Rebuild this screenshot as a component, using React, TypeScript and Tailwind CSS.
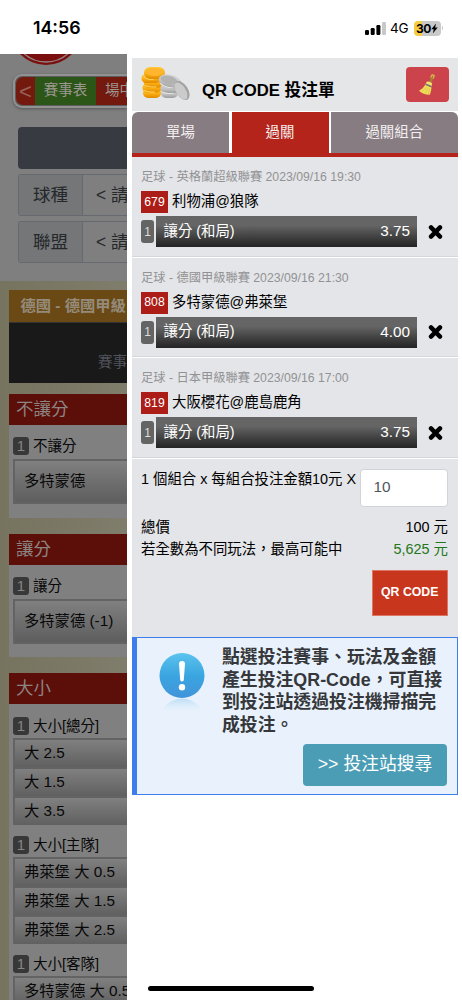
import type { ReactNode } from "react";
import clsx from "clsx";

const bets = [
  { league: "足球 - 英格蘭超級聯賽 2023/09/16 19:30", no: "679", match: "利物浦@狼隊", odds: "3.75" },
  { league: "足球 - 德國甲級聯賽 2023/09/16 21:30", no: "808", match: "多特蒙德@弗萊堡", odds: "4.00" },
  { league: "足球 - 日本甲級聯賽 2023/09/16 17:00", no: "819", match: "大阪櫻花@鹿島鹿角", odds: "3.75" },
];

const totals = [
  { title: "大小[總分]", rows: ["大 2.5", "大 1.5", "大 3.5"] },
  { title: "大小[主隊]", rows: ["弗萊堡 大 0.5", "弗萊堡 大 1.5", "弗萊堡 大 2.5"] },
  { title: "大小[客隊]", rows: ["多特蒙德 大 0.5"] },
];

const alertLines = ["點選投注賽事、玩法及金額", "產生投注QR-Code，可直接", "到投注站透過投注機掃描完", "成投注。"];

function StatusBar() {
  return (
    <div className="flex h-[54px] items-start justify-between pt-[18px] pr-[19px] pl-[33px]">
      <span className="font-['Inter'] text-[17.8px] leading-5 font-semibold">14:56</span>
      <div className="flex h-5 items-center">
        <svg width="21" height="14" viewBox="0 0 21 14">
          <rect x="0" y="9" width="4" height="5" rx="1.2" />
          <rect x="5.7" y="7" width="4" height="7" rx="1.2" />
          <rect x="11.4" y="4" width="4" height="10" rx="1.2" />
          <rect x="17" y="1" width="4" height="13" rx="1.2" fill="#c8c8c8" />
        </svg>
        <span className="ml-1 font-['Inter'] text-[13.5px] tracking-[-0.2px]">4G</span>
        <div className="ml-[5px] flex h-[15px] w-[27px] items-center justify-center rounded-[4px] bg-linear-to-r from-[#f7cc45] from-30% to-[#c9c9c9] to-30%">
          <span className="font-['Inter'] text-[12px] leading-[15px] font-bold tracking-[-0.3px]">30</span>
          <svg width="7" height="11" viewBox="0 0 7 11">
            <path d="M5 0.5 0.3 6.2h2.5L1.8 10.5 6.7 4.6H4.1Z" />
          </svg>
        </div>
        <span className="ml-px h-1 w-[1.5px] rounded-r bg-[#c9c9c9]" />
      </div>
    </div>
  );
}

function Badge() {
  return (
    <span className="flex h-[18px] w-4 shrink-0 items-center justify-center rounded-[3px] bg-[#383838] text-[15px] text-[#858585]">
      1
    </span>
  );
}

function SectionTitle({ children }: { children: ReactNode }) {
  return (
    <h2 className="flex h-[31px] items-center bg-[#5c0e09] pl-[7px] text-[17.5px] text-[#8b8581]">{children}</h2>
  );
}

function Filter({ label }: { label: string }) {
  return (
    <div className="mb-[5px] ml-[18px] flex h-[42px] items-stretch rounded-l-[3px] border border-r-0 border-[#666a70] bg-[#7f7f7f] text-[17.5px] text-[#25282b]">
      <div className="flex w-16 shrink-0 items-center justify-center border-r border-[#666a70] bg-[#747678]">{label}</div>
      <div className="flex items-center pl-[13px]">&lt; 請</div>
    </div>
  );
}

function Market({ title, pick }: { title: string; pick: string }) {
  return (
    <section className="mb-4 ml-[9px]">
      <SectionTitle>{title}</SectionTitle>
      <div className="h-[92.5px] bg-[#808080] pt-[12px] pl-1">
        <div className="flex items-center gap-1 text-[14.5px] leading-[18px]">
          <Badge />
          {title}
        </div>
        <div className="mt-1 flex h-[45px] items-center border-2 border-r-0 border-[#636363] bg-linear-to-b from-[#808080] to-[#5e5e5e] pl-[9px] text-[15.3px]">
          {pick}
        </div>
      </div>
    </section>
  );
}

function Background() {
  return (
    <div className="h-full w-[127px] shrink-0 overflow-hidden bg-[#7f7f7f] whitespace-nowrap text-[#080808]">
      <svg width="127" height="20" viewBox="0 0 127 20" className="block">
        <circle cx="46" cy="-25" r="36" fill="#79100f" />
        <circle cx="46" cy="-25" r="33" fill="none" stroke="#938686" strokeWidth="1.3" />
      </svg>
      <div className="ml-[13px] flex h-[34px] rounded-l-[9px] border-2 border-r-0 border-[#929292] bg-[#5d5d5d] py-px pl-px text-[14.5px] text-[#9c9691] shadow-[0_1px_3px_#555]">
        <div className="flex w-[19px] shrink-0 items-center justify-center rounded-l-[7px] bg-[#74190e] text-[22px] text-[#9a6159]">&lt;</div>
        <div className="flex w-[61px] shrink-0 items-center justify-center bg-[#2c5617]">賽事表</div>
        <div className="flex flex-1 items-center overflow-hidden bg-[#74190e] pl-[9px]">場中</div>
      </div>
      <div className="mt-[19px] mb-[5px] ml-[18px] h-[42px] rounded-l-[4px] bg-[#373a40]" />
      <Filter label="球種" />
      <Filter label="聯盟" />
      <div className="mt-[18px] bg-linear-to-r from-[#76745f] to-[#7f7d6b] pt-[9px] pb-6">
        <div className="ml-[9px] flex h-8 items-center bg-[#6b4914] pl-[11.5px] text-[15.3px] font-bold text-[#948b7a]">
          德國 - 德國甲級
        </div>
        <div className="mb-[11px] ml-[9px] flex h-[61px] items-end border-t border-[#333] bg-[#191919] pb-[9px] pl-[89px] text-[14.5px] text-[#50525b]">
          賽事
        </div>
        <Market title="不讓分" pick="多特蒙德" />
        <Market title="讓分" pick="多特蒙德 (-1)" />
        <section className="ml-[9px]">
          <SectionTitle>大小</SectionTitle>
          <div className="bg-[#808080] pt-[13px] pl-1">
            {totals.map((group) => (
              <div key={group.title} className="mb-[11px]">
                <div className="mb-[3px] flex items-center gap-1 text-[14.5px] leading-[18px]">
                  <Badge />
                  {group.title}
                </div>
                <div className="border-l-2 border-[#636363]">
                  {group.rows.map((row) => (
                    <div
                      key={row}
                      className="flex h-[29px] items-center border-t-2 border-[#636363] bg-linear-to-b from-[#808080] to-[#606060] pl-[9px] text-[15.3px]"
                    >
                      {row}
                    </div>
                  ))}
                </div>
              </div>
            ))}
          </div>
        </section>
      </div>
    </div>
  );
}

function Coins() {
  return (
    <svg width="52" height="38" viewBox="0 0 52 38">
      <defs>
        <linearGradient id="gold" x1="0" x2="0" y1="0" y2="1">
          <stop offset="0" stopColor="#ffc93c" />
          <stop offset="0.55" stopColor="#fcae14" />
          <stop offset="1" stopColor="#e08a00" />
        </linearGradient>
        <linearGradient id="silver" x1="0" x2="0" y1="0" y2="1">
          <stop offset="0" stopColor="#d4d4d4" />
          <stop offset="0.6" stopColor="#c3c3c3" />
          <stop offset="1" stopColor="#9c9c9c" />
        </linearGradient>
      </defs>
      <g fill="url(#gold)">
        <rect x="3" y="23" width="18" height="10" rx="5" />
        <rect x="2.5" y="18" width="19" height="9.5" rx="4.7" />
        <rect x="4" y="13.5" width="19" height="9" rx="4.5" />
        <rect x="1.5" y="9" width="19" height="9" rx="4.5" />
        <rect x="4" y="2" width="21" height="12" rx="6" />
      </g>
      <ellipse cx="14.5" cy="7" rx="8.5" ry="4" fill="#ffb52e" />
      <path d="M4 11.5q3 3.5 9 3M5 20.5q4 2 11 1.2M4.5 25.5q4 2 10 1.5" fill="none" stroke="#ffd45c" strokeWidth="1.1" strokeLinecap="round" />
      <g fill="url(#silver)">
        <rect x="21" y="23" width="17" height="10" rx="5" />
        <rect x="20.5" y="18" width="19" height="10" rx="5" />
        <ellipse cx="30" cy="16.5" rx="11.5" ry="6.8" transform="rotate(14 30 16.5)" />
      </g>
      <ellipse cx="29" cy="15" rx="8.5" ry="4" fill="#b2b2b2" transform="rotate(14 29 15)" />
      <path d="M20.5 18.5q5 4.5 13 4.5M22 27q5 2.2 11 1.2" fill="none" stroke="#e2e2e2" strokeWidth="1.1" strokeLinecap="round" />
      <ellipse cx="42" cy="25.5" rx="6" ry="10.5" fill="#a2a2a2" transform="rotate(-32 42 25.5)" />
      <ellipse cx="41" cy="26" rx="4.8" ry="9.6" fill="#cbcbcb" transform="rotate(-32 41 26)" />
    </svg>
  );
}

function Broom() {
  return (
    <svg width="18" height="23" viewBox="0 0 18 23">
      <path d="m12 10 3-7" stroke="#a97c32" strokeWidth="2.8" strokeLinecap="round" />
      <path d="m12.6 4.5 1.5-2.7 2 .7-.7 3" fill="none" stroke="#e1b654" strokeWidth="1.2" />
      <path d="M8.5 9c.7-1.4 5.6.2 5.6 2l-.8 3.2-5.8-2.4Z" fill="#f5e272" />
      <path d="M7.4 11.3C5.7 14.8 3.8 16.3 1 17.7c2.8 2.8 6.7 4.2 10.7 4.1 1.1-2.5 1.8-4.8 1.7-8.1Z" fill="#efdc59" />
      <path d="m7.6 11.2 6.1 2.5" stroke="#81706b" strokeWidth="1.6" />
      <path d="M4.1 18.6 8 14.5M7.3 20.3l2.5-5.2M10.4 21l1.3-5.3" stroke="#cdb645" strokeWidth="0.6" />
    </svg>
  );
}

function Tab({ children, className }: { children: ReactNode; className: string }) {
  return <div className={clsx("flex items-center justify-center", className)}>{children}</div>;
}

function Bet({ bet }: { bet: (typeof bets)[number] }) {
  return (
    <div className="h-[100.5px] border-b border-white bg-[#e4e5e8] pt-[11px] pl-[9px] shadow-[inset_0_-1px_0_#d5d6d9]">
      <p className="text-[12.25px] leading-[18px] text-[#929294]">{bet.league}</p>
      <div className="mt-[5px] flex h-[22px] items-center gap-1">
        <span className="flex h-[22px] w-[27px] items-center justify-center bg-[#ab1d16] text-[12.2px] text-white">{bet.no}</span>
        <span className="text-[14.4px]">{bet.match}</span>
      </div>
      <div className="mt-[3px] flex h-[31px] items-center">
        <span className="flex h-[23px] w-[13px] items-center justify-center rounded-[3px] bg-[#646464] text-[12px] text-[#ddd]">1</span>
        <div className="ml-[2px] flex h-full w-[261px] items-center justify-between bg-linear-to-b from-[#656565] from-30% to-[#242424] pr-[7px] pl-[7.5px] text-white">
          <span className="text-[14.4px]">讓分 (和局)</span>
          <span className="text-[15.3px]">{bet.odds}</span>
        </div>
        <svg width="15" height="14" viewBox="0 0 15 14" className="ml-[10.5px]">
          <path d="m3 2.4 9 9.2m0-9.2-9 9.2" stroke="#000" strokeWidth="4.4" strokeLinecap="round" />
        </svg>
      </div>
    </div>
  );
}

function AlertIcon() {
  return (
    <svg width="46" height="64" viewBox="0 0 46 64">
      <defs>
        <linearGradient id="ball" x1="0" x2="0" y1="0" y2="1">
          <stop offset="0" stopColor="#5cc3ee" />
          <stop offset="0.5" stopColor="#3aa5e0" />
          <stop offset="1" stopColor="#4294da" />
        </linearGradient>
        <linearGradient id="mirror" x1="0" x2="0" y1="0" y2="1">
          <stop offset="0" stopColor="#a9d5f2" stopOpacity="0.7" />
          <stop offset="0.35" stopColor="#e9f2fc" stopOpacity="0" />
        </linearGradient>
      </defs>
      <circle cx="23" cy="69" r="22.5" fill="url(#mirror)" />
      <circle cx="23" cy="23.5" r="22.5" fill="url(#ball)" />
      <path d="M20 12a3 3 0 0 1 6 0l-1.2 15.8a1.8 1.8 0 0 1-3.6 0Z" fill="#fff" />
      <circle cx="23" cy="35.3" r="3.2" fill="#fff" />
    </svg>
  );
}

function BetSlip() {
  return (
    <div className="mt-1 ml-[5px] w-[325.5px] shrink-0 whitespace-nowrap">
      <header className="flex h-[53px] items-start justify-between bg-[#e4e6e8] pt-[7px] pr-[9px] pl-[8px]">
        <div className="flex items-start">
          <Coins />
          <h1 className="ml-[10px] pt-[14px] text-[16.7px] leading-6 font-bold">QR CODE 投注單</h1>
        </div>
        <button className="mt-[2px] flex h-[35px] w-[43px] items-center justify-center rounded-[4px] bg-[#cc434b]">
          <Broom />
        </button>
      </header>
      <nav className="mt-px flex h-[45px] gap-[2.5px] border-b-4 border-[#b5241a] text-[14.4px] text-[#f3eff0]">
        <Tab className="w-[97px] rounded-tl-[6px] bg-[#877c82]">單場</Tab>
        <Tab className="w-[97px] bg-[#b5241a]">過關</Tab>
        <Tab className="flex-1 rounded-tr-[6px] bg-[#877c82]">過關組合</Tab>
      </nav>
      {bets.map((bet) => (
        <Bet key={bet.no} bet={bet} />
      ))}
      <div className="h-[178.5px] bg-[#e4e5e8] pt-[10px] pr-[9.5px] pl-[9px] text-[14.4px]">
        <div className="flex items-start justify-between">
          <span className="leading-5">1 個組合 x 每組合投注金額10元 X</span>
          <div className="flex h-[38px] w-[88.5px] items-center rounded-[4px] border border-[#d0d4d9] bg-white pl-[13px] text-[15.3px] text-[#50565c]">10</div>
        </div>
        <div className="mt-[9px] flex justify-between leading-[22.5px]">
          <span>總價</span>
          <span>100 元</span>
        </div>
        <div className="flex justify-between leading-[22.5px]">
          <span>若全數為不同玩法，最高可能中</span>
          <span className="text-[#23761a]">5,625 元</span>
        </div>
        <button className="mt-[9px] ml-auto flex h-[46px] w-[76.5px] items-center justify-center border border-[#dd7565] bg-[#c8361d] text-[12.3px] font-bold text-white">
          QR CODE
        </button>
      </div>
      <div className="flex h-[158px] border border-l-5 border-[#3d7eea] bg-[#e9f2fc] pt-[14px] pr-[9.5px] pl-[21.5px]">
        <AlertIcon />
        <div className="ml-[17.5px] flex-1 text-[#35373a]">
          <p className="mt-[-6px] text-[17.85px] leading-[22.5px] font-bold">
            {alertLines.map((line) => (
              <span key={line} className="block">{line}</span>
            ))}
          </p>
          <button className="mt-[7.5px] ml-auto flex h-[42px] w-36 items-center justify-center rounded-[4px] bg-[#4a9db5] text-[17.8px] text-white">
            &gt;&gt; 投注站搜尋
          </button>
        </div>
      </div>
    </div>
  );
}

export default function App() {
  return (
    <div className="relative h-[1000px] w-[462px] overflow-hidden bg-white font-['Liberation_Sans','Noto_Sans_CJK_TC',sans-serif] text-black">
      <StatusBar />
      <main className="flex h-[946px] items-start">
        <Background />
        <BetSlip />
      </main>
      <div className="absolute bottom-[9px] left-[148px] h-[5.5px] w-[166px] rounded-full bg-black" />
    </div>
  );
}
